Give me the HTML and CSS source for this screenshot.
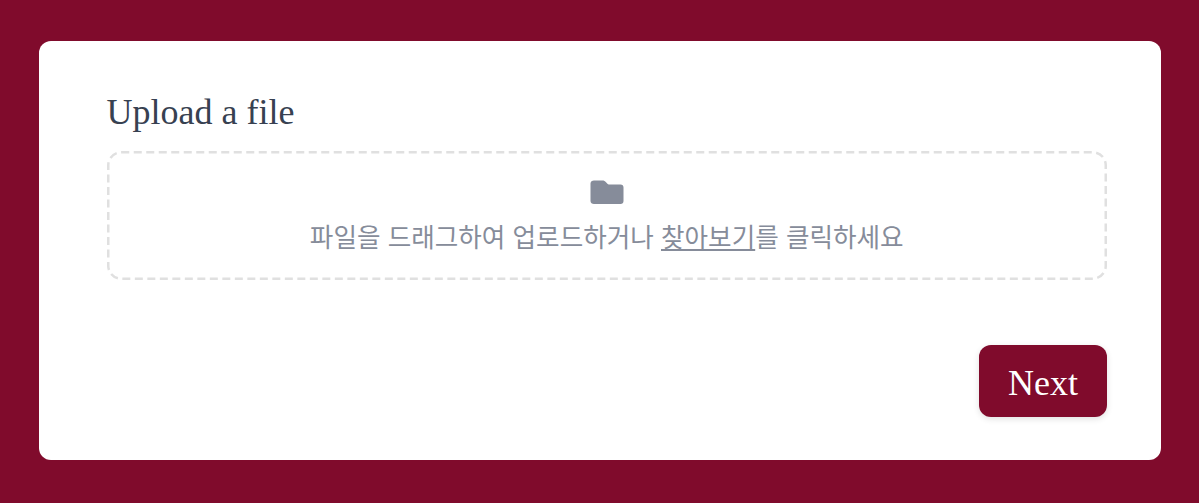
FILE: index.html
```html
<!DOCTYPE html>
<html lang="ko">
<head>
  <meta charset="UTF-8">
  <meta name="viewport" content="width=device-width, initial-scale=1.0">
  <title>Upload a file</title>
  <link rel="stylesheet" href="styles.css">
</head>
<body>
  <div class="card">
    <label class="field-label">Upload a file</label>
    <div class="dropzone">
      <!-- dashed outline, css dashes come out too short -->
      <svg class="dropzone-border" width="1000" height="129" viewBox="0 0 1000 129">
        <rect x="1.25" y="1.25" width="997.5" height="126.5" rx="13" ry="13"/>
      </svg>
      <svg class="folder-icon" width="34" height="24" viewBox="0 0 34 24">
        <path d="M4 0.5H12.5C14 0.5 15 1 16 2.2L17.2 3.6C17.8 4.3 18.4 4.6 19.4 4.6H30.5C32.4 4.6 33.5 5.8 33.5 7.6V21C33.5 22.8 32.4 24 30.5 24H4C2 24 0.5 22.8 0.5 21V3.5C0.5 1.7 2 0.5 4 0.5Z"/>
      </svg>
      <p class="dropzone-text">파일을 드래그하여 업로드하거나 <a href="#">찾아보기</a>를 클릭하세요</p>
    </div>
    <div class="actions">
      <button class="next-btn">Next</button>
    </div>
  </div>
</body>
</html>
```

FILE: styles.css
```css
body {
  margin: 0;
  height: 503px;
  box-sizing: border-box;
  padding: 41px 38px 43px 39px;
  background-color: #800b2c;
  overflow: hidden;
}

.card {
  height: 419px;
  box-sizing: border-box;
  padding: 49px 54px 0 67.5px;
  background: #fff;
  border-radius: 12px;
}

.field-label {
  display: block;
  font-family: "Liberation Serif", serif;
  font-size: 36px;
  line-height: 44px;
  color: #374151;
  margin-bottom: 16.5px;
}

.dropzone {
  position: relative;
  height: 129px;
  box-sizing: border-box;
  display: flex;
  flex-direction: column;
  align-items: center;
  padding-top: 29.5px;
}

.dropzone-border {
  position: absolute;
  top: 0;
  left: 0;
  fill: none;
  stroke: #e0e0e0;
  stroke-width: 2.5;
  stroke-dasharray: 8 4.5;
}

.folder-icon {
  fill: #868c9a;
  display: block;
}

.dropzone-text {
  margin: 15px 0 0;
  font-family: "Noto Sans CJK KR", sans-serif;
  font-size: 25.6px;
  line-height: 34px;
  color: #868c9a;
}

.dropzone-text a {
  color: inherit;
  text-decoration: underline;
}

.actions {
  display: flex;
  justify-content: flex-end;
  margin-top: 65.5px;
}

.next-btn {
  width: 128px;
  height: 72px;
  padding: 4px 0 0;
  border: none;
  border-radius: 12px;
  background: #800b2c;
  color: #fff;
  font-family: "Liberation Serif", serif;
  font-size: 36px;
  box-shadow: 0 2px 6px rgba(0, 0, 0, 0.12);
}
```
